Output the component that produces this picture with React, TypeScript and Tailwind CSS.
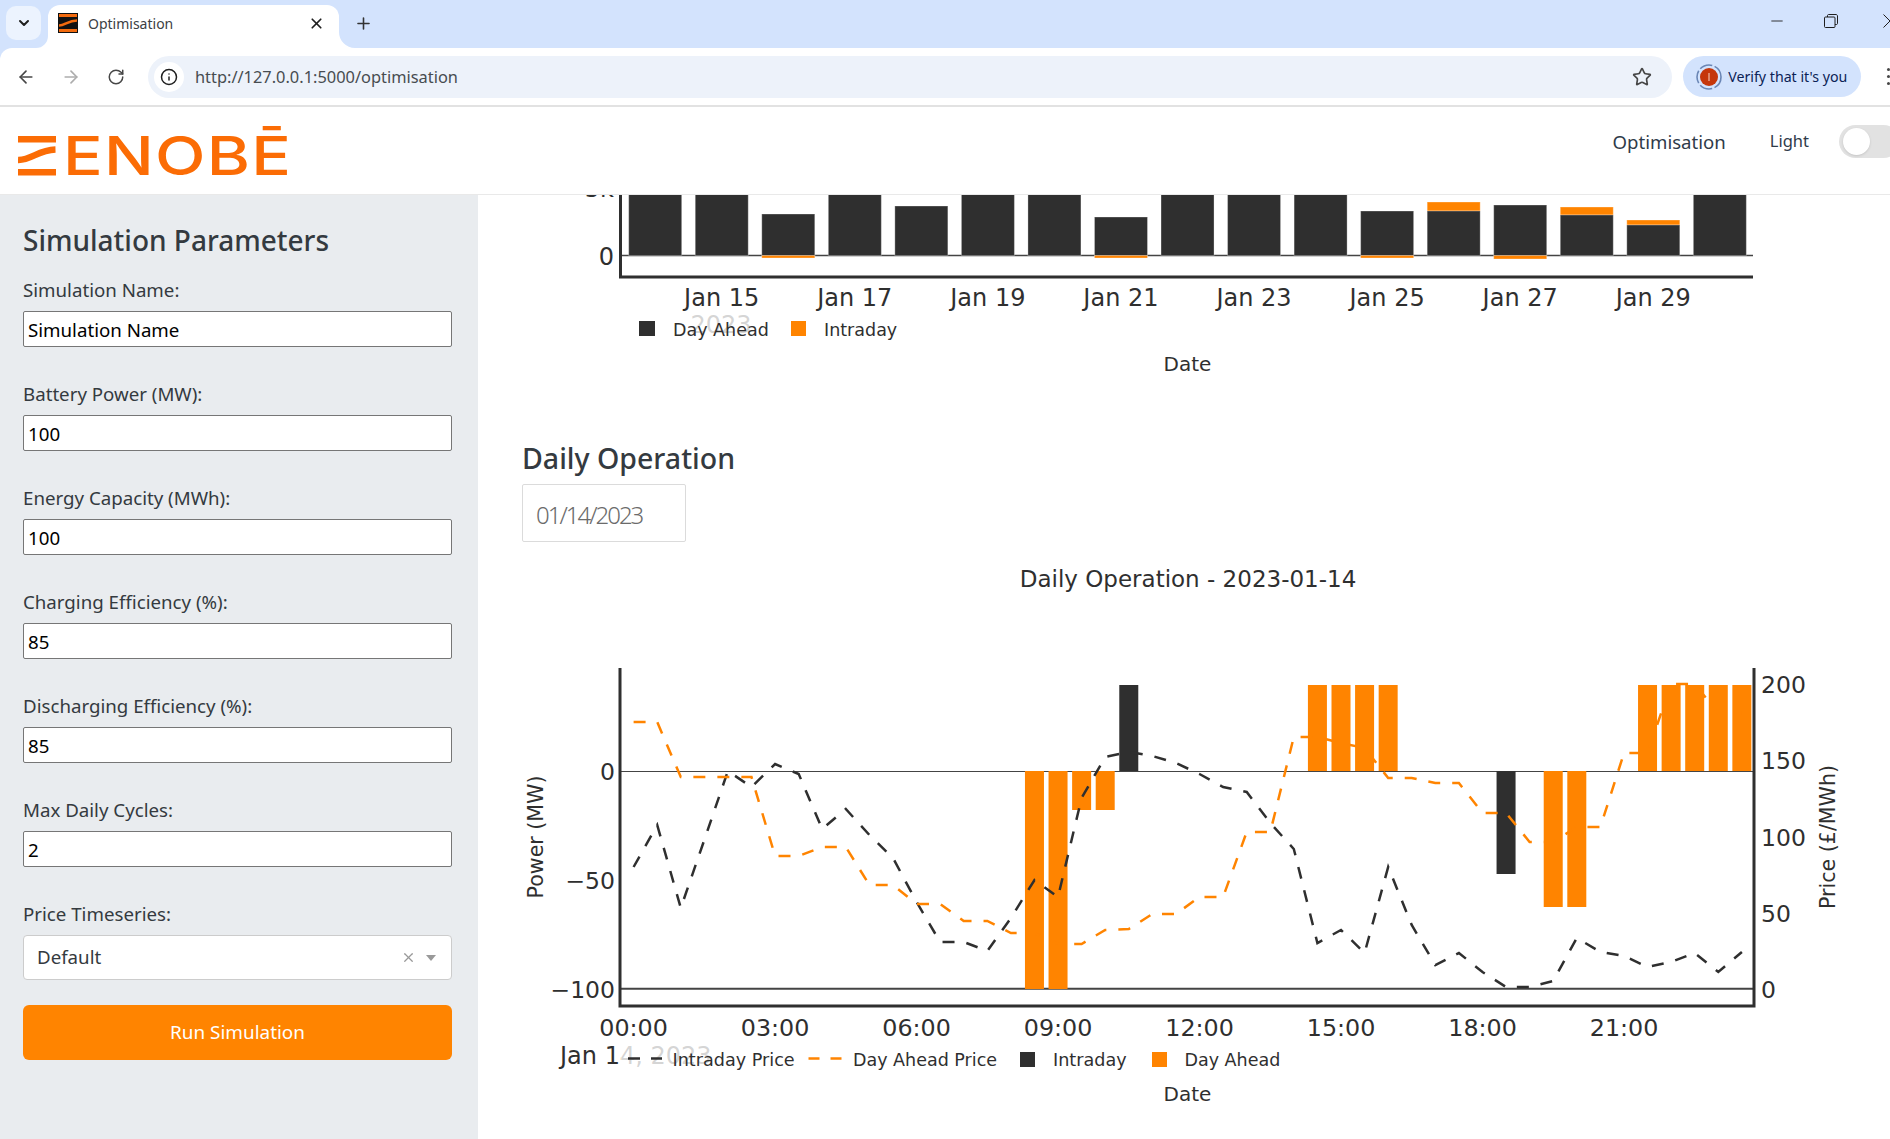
import { ArrowLeft, ArrowRight, ChevronDown, Info, Minus, Plus, RotateCw, Star, X } from "lucide-react";

const ORANGE = "#ff8400";
const DARK = "#2f2f2f";
const CHART_FONT = "'DejaVu Sans', sans-serif";

const fields = [
    { label: "Simulation Name:", value: "Simulation Name" },
    { label: "Battery Power (MW):", value: "100" },
    { label: "Energy Capacity (MWh):", value: "100" },
    { label: "Charging Efficiency (%):", value: "85" },
    { label: "Discharging Efficiency (%):", value: "85" },
    { label: "Max Daily Cycles:", value: "2" },
];

// top chart: y of dark top, orange top/bottom. 190 means the bar runs under the header
const monthBars = [
    { dark: 190 },
    { dark: 190 },
    { dark: 214, below: 258 },
    { dark: 190 },
    { dark: 206 },
    { dark: 190 },
    { dark: 190 },
    { dark: 217, below: 258 },
    { dark: 190 },
    { dark: 190 },
    { dark: 190 },
    { dark: 211, below: 258 },
    { dark: 211, above: 202 },
    { dark: 205, below: 259 },
    { dark: 215, above: 207 },
    { dark: 225, above: 220 },
    { dark: 190 },
];

const monthTicks = ["Jan 15", "Jan 17", "Jan 19", "Jan 21", "Jan 23", "Jan 25", "Jan 27", "Jan 29"];

// half-hourly series, read off the plot in pixels
const intradayPrice = [
    867, 825, 908, 840, 771, 787, 764, 774, 829, 809, 835, 858, 902, 942, 942, 951, 918, 880, 897, 798, 757, 752,
    756, 763, 774, 787, 792, 823, 849, 943, 930, 953, 867, 925, 965, 953, 972, 987, 987, 981, 938, 952, 956, 967,
    962, 953, 972, 952,
];
const dayAheadPrice = [
    722, 722, 777, 777, 777, 777, 856, 856, 847, 847, 885, 885, 904, 904, 921, 921, 933, 933, 944, 944, 930, 929,
    914, 914, 897, 897, 832, 832, 737, 737, 743, 748, 778, 778, 783, 783, 813, 813, 842, 842, 827, 827, 753, 753,
    684, 684, 713, 713,
];

// half-hour slot, top y, bottom y
const dayBars = [
    { slot: 17, top: 771, bottom: 989, color: ORANGE },
    { slot: 18, top: 771, bottom: 989, color: ORANGE },
    { slot: 19, top: 771, bottom: 810, color: ORANGE },
    { slot: 20, top: 771, bottom: 810, color: ORANGE },
    { slot: 21, top: 685, bottom: 771, color: DARK },
    { slot: 29, top: 685, bottom: 771, color: ORANGE },
    { slot: 30, top: 685, bottom: 771, color: ORANGE },
    { slot: 31, top: 685, bottom: 771, color: ORANGE },
    { slot: 32, top: 685, bottom: 771, color: ORANGE },
    { slot: 37, top: 771, bottom: 874, color: DARK },
    { slot: 39, top: 771, bottom: 907, color: ORANGE },
    { slot: 40, top: 771, bottom: 907, color: ORANGE },
    { slot: 43, top: 685, bottom: 771, color: ORANGE },
    { slot: 44, top: 685, bottom: 771, color: ORANGE },
    { slot: 45, top: 685, bottom: 771, color: ORANGE },
    { slot: 46, top: 685, bottom: 771, color: ORANGE },
    { slot: 47, top: 685, bottom: 771, color: ORANGE },
];

const slotX = (slot: number) => 633.6 + slot * 23.58;

const toPoints = (series: number[]) => series.map((y, i) => `${slotX(i).toFixed(1)},${y}`).join(" ");

function Favicon() {
    return (
        <svg width="20" height="20" viewBox="0 0 20 20" className="shrink-0">
            <rect width="20" height="20" fill="#111" />
            <rect x="1" y="1" width="18" height="3" fill="#f26a0e" />
            <rect x="1" y="16" width="18" height="3" fill="#f26a0e" />
            <path d="M1 12.5C7 12.5 10 7.5 19 7.5" fill="none" stroke="#f26a0e" strokeWidth="2.6" />
        </svg>
    );
}

function BrowserTabs() {
    return (
        <div className="flex h-12 items-start overflow-hidden pl-[6px]">
            <div className="mt-[6px] flex h-[34px] w-[35px] items-center justify-center rounded-[10px] bg-[#ecf3fe]">
                <ChevronDown size={16} strokeWidth={3} className="text-[#1f1f1f]" />
            </div>
            <div className="relative mt-[5px] ml-[7px] flex h-[43px] w-[291px] items-center rounded-t-[12px] bg-white pr-[14px] pb-[7px] pl-[10px]">
                <svg width="12" height="12" viewBox="0 0 12 12" className="absolute bottom-0 -left-3">
                    <path d="M12 0V12H0A12 12 0 0 0 12 0Z" fill="#fff" />
                </svg>
                <svg width="16" height="16" viewBox="0 0 16 16" className="absolute -right-4 bottom-0">
                    <path d="M0 0V16H16A16 16 0 0 1 0 0Z" fill="#fff" />
                </svg>
                <Favicon />
                <span className="ml-[10px] flex-1 font-['Noto_Sans'] text-[14px] text-[#3c4043]">Optimisation</span>
                <X size={17} strokeWidth={2.4} className="text-[#1f1f1f]" />
            </div>
            <Plus size={19} strokeWidth={2} className="mt-[14px] ml-[15px] text-[#333]" />
            <div className="mt-[12px] ml-auto flex items-start text-[#1f1f1f]">
                <Minus size={18} strokeWidth={1.2} className="mt-[0px]" />
                <svg width="14" height="14" viewBox="0 0 14 14" className="mt-[2px] ml-[38px]" fill="none" stroke="#1f1f1f">
                    <rect x="0.5" y="3" width="10.5" height="10.5" rx="1" />
                    <path d="M3.5 3V1.5C3.5 1 4 0.5 4.5 0.5H12C12.8 0.5 13.5 1.2 13.5 2V9.5C13.5 10 13 10.5 12.5 10.5H11" />
                </svg>
                <svg width="14" height="14" viewBox="0 0 14 14" className="mt-[2px] mr-[-7px] ml-[45px]" fill="none" stroke="#1f1f1f">
                    <path d="M0.5 0.5L13.5 13.5M13.5 0.5L0.5 13.5" />
                </svg>
            </div>
        </div>
    );
}

function BrowserToolbar() {
    return (
        <div className="flex h-[59px] items-center overflow-hidden rounded-tl-[12px] border-b-2 border-[#e2e2e2] bg-white pl-[16px]">
            <ArrowLeft size={20} className="text-[#474747]" />
            <ArrowRight size={20} className="ml-[25px] text-[#adadad]" />
            <RotateCw size={18} className="ml-[26px] text-[#474747]" />
            <div className="ml-[23px] flex h-[42px] w-[1526px] items-center rounded-full bg-[#edf2fa] pr-[20px] pl-[6px]">
                <div className="flex h-[30px] w-[30px] items-center justify-center rounded-full bg-white">
                    <Info size={18} strokeWidth={2} className="text-[#1f1f1f]" />
                </div>
                <span className="ml-[11px] flex-1 pt-[2px] font-['Noto_Sans'] text-[16.4px] text-[#474c50]">
                    http://127.0.0.1:5000/optimisation
                </span>
                <Star size={20} strokeWidth={2} className="text-[#474747]" />
            </div>
            <div className="ml-[11px] flex h-[41px] w-[178px] items-center rounded-full bg-[#d3e3fd] pl-[13px]">
                <svg width="26" height="26" viewBox="0 0 26 26" className="shrink-0">
                    <circle cx="13" cy="13" r="12" fill="none" stroke="#6a86b5" strokeWidth="1.6" strokeDasharray="13 2.5" />
                    <circle cx="13" cy="13" r="9" fill="#c5360b" />
                    <rect x="12.5" y="9" width="1" height="8" fill="#f7d5c8" />
                </svg>
                <span className="ml-[6px] font-['Noto_Sans'] text-[14.2px] text-[#0b2255]">Verify that it's you</span>
            </div>
            <div className="ml-[26px] flex flex-col gap-[4px]">
                <span className="h-[3px] w-[3px] rounded-full bg-[#474747]" />
                <span className="h-[3px] w-[3px] rounded-full bg-[#474747]" />
                <span className="h-[3px] w-[3px] rounded-full bg-[#474747]" />
            </div>
        </div>
    );
}

function Logo() {
    return (
        <div className="mt-[10px] flex items-center">
            <svg width="38" height="40" viewBox="0 0 38 40" className="shrink-0">
                <path d="M0 0H38V6.5H0Z M0 33H38V39.5H0Z" fill="#fb6c05" />
                <path d="M0 24C13 24.5 20 14 37.5 13.5" fill="none" stroke="#fb6c05" strokeWidth="6.5" />
            </svg>
            <span className="ml-[7px] inline-block origin-left scale-x-[1.22] font-['Inter'] text-[54px] leading-none font-medium tracking-[1px] text-[#fb6c05]">
                ENOBĒ
            </span>
        </div>
    );
}

function PageHeader() {
    return (
        <header className="flex h-[88px] items-center overflow-hidden border-b border-[#e9e9e9] bg-white pl-[18px]">
            <Logo />
            <nav className="mb-[18px] ml-auto flex items-center font-['Noto_Sans'] text-[#2f3b4a]">
                <a className="text-[18.6px]">Optimisation</a>
                <span className="ml-[44px] text-[16.5px]">Light</span>
                <span className="relative mr-[-10px] ml-[30px] h-[33px] w-[61px] rounded-full bg-[#e2e2e2]">
                    <span className="absolute top-[3px] left-[4px] h-[27px] w-[27px] rounded-full bg-white shadow-sm" />
                </span>
            </nav>
        </header>
    );
}

function Sidebar() {
    return (
        <aside className="h-full w-[478px] shrink-0 bg-[#e9ecef] px-[23px] pt-[28px] font-['Noto_Sans'] text-[#343a40]">
            <h2 className="mb-[21px] text-[28px] leading-[34px] font-medium">Simulation Parameters</h2>
            {fields.map((field) => (
                <div key={field.label} className="mb-[35px]">
                    <label className="mb-[9px] block text-[18.7px] leading-[24px]">{field.label}</label>
                    <input
                        readOnly
                        value={field.value}
                        className="block h-[36px] w-[429px] rounded-[2px] border border-[#767676] bg-white px-[4px] text-[18.7px] text-black"
                    />
                </div>
            ))}
            <label className="mb-[9px] block text-[18.7px] leading-[24px]">Price Timeseries:</label>
            <div className="flex h-[45px] w-[429px] items-center rounded-[4px] border border-[#ccc] bg-white pr-[15px] pl-[13px] text-[18.7px]">
                <span className="flex-1">Default</span>
                <X size={15} strokeWidth={2} className="text-[#999]" />
                <span className="ml-[10px] h-0 w-0 border-x-[5px] border-t-[6px] border-x-transparent border-t-[#999]" />
            </div>
            <button
                type="button"
                className="mt-[25px] h-[55px] w-[429px] rounded-[6px] bg-[#ff8400] text-[18.9px] text-white"
            >
                Run Simulation
            </button>
        </aside>
    );
}

function MonthlyChart() {
    return (
        <svg viewBox="478 195 1412 245" className="block h-[245px] w-[1412px] shrink-0" fontFamily={CHART_FONT} fill={DARK}>
            <text x="614" y="196.5" fontSize="24" textAnchor="end">5k</text>
            <text x="614" y="264.5" fontSize="24" textAnchor="end">0</text>
            <line x1="621" x2="1753" y1="255.5" y2="255.5" stroke="#444" strokeWidth="1.5" />
            {monthBars.map((bar, i) => {
                const x = 628.7 + i * 66.54;
                return (
                    <g key={i} stroke="#fff" strokeOpacity="0.3" strokeWidth="1">
                        {bar.above && <rect x={x} y={bar.above} width="53" height={bar.dark - bar.above} fill={ORANGE} />}
                        <rect x={x} y={bar.dark} width="53" height={255.5 - bar.dark} fill={DARK} />
                        {bar.below && <rect x={x} y="255.5" width="53" height={bar.below - 255.5} fill={ORANGE} />}
                    </g>
                );
            })}
            <path d="M620.5 195V277H1753" fill="none" stroke={DARK} strokeWidth="3" />
            {monthTicks.map((tick, i) => (
                <text key={tick} x={721.7 + i * 133.08} y="305.5" fontSize="24" textAnchor="middle">{tick}</text>
            ))}
            <text x="721" y="333" fontSize="24" textAnchor="middle">2023</text>
            <rect x="631" y="314" width="280" height="30" fill="#fff" fillOpacity="0.8" />
            <rect x="639" y="321" width="16" height="15" fill={DARK} />
            <text x="673" y="336" fontSize="17.5">Day Ahead</text>
            <rect x="791" y="321" width="15" height="15" fill={ORANGE} />
            <text x="824" y="336" fontSize="17.5">Intraday</text>
            <text x="1187.5" y="371" fontSize="20" textAnchor="middle">Date</text>
        </svg>
    );
}

function DailyChart() {
    const hours = ["00:00", "03:00", "06:00", "09:00", "12:00", "15:00", "18:00", "21:00"];
    const leftTicks = [
        { label: "0", y: 771 },
        { label: "−50", y: 880 },
        { label: "−100", y: 989 },
    ];
    const rightTicks = [
        { label: "200", y: 684 },
        { label: "150", y: 760 },
        { label: "100", y: 837 },
        { label: "50", y: 913 },
        { label: "0", y: 989 },
    ];

    return (
        <svg viewBox="478 550 1412 589" className="block h-[589px] w-[1412px] shrink-0" fontFamily={CHART_FONT} fill={DARK}>
            <text x="1188" y="587" fontSize="23" textAnchor="middle">Daily Operation - 2023-01-14</text>

            <line x1="621" x2="1754" y1="771.5" y2="771.5" stroke="#444" strokeWidth="1" />
            <line x1="621" x2="1754" y1="988.7" y2="988.7" stroke="#444" strokeWidth="2" />
            {dayBars.map((bar) => (
                <rect
                    key={bar.slot}
                    x={slotX(bar.slot) - 9.5}
                    y={bar.top}
                    width="19"
                    height={bar.bottom - bar.top}
                    fill={bar.color}
                />
            ))}
            <polyline points={toPoints(intradayPrice)} fill="none" stroke={DARK} strokeWidth="2.5" strokeDasharray="12 12" />
            <polyline points={toPoints(dayAheadPrice)} fill="none" stroke={ORANGE} strokeWidth="2.5" strokeDasharray="12 12" />
            <path d="M620 668V1006H1754V668" fill="none" stroke={DARK} strokeWidth="3" />

            {leftTicks.map((tick) => (
                <text key={tick.y} x="615" y={tick.y + 9} fontSize="23.5" textAnchor="end">{tick.label}</text>
            ))}
            {rightTicks.map((tick) => (
                <text key={tick.y} x="1761" y={tick.y + 8.5} fontSize="23.5">{tick.label}</text>
            ))}
            {hours.map((hour, i) => (
                <text key={hour} x={633.6 + i * 141.5} y="1035.5" fontSize="23.8" textAnchor="middle">{hour}</text>
            ))}
            <text x="560" y="1064" fontSize="24">Jan 14, 2023</text>
            <rect x="621" y="1046" width="668" height="30" fill="#fff" fillOpacity="0.8" />

            <text transform="translate(542.5 837) rotate(-90)" fontSize="20.6" textAnchor="middle">Power (MW)</text>
            <text transform="translate(1835 837) rotate(-90)" fontSize="20.6" textAnchor="middle">Price (£/MWh)</text>

            <line x1="628" x2="662" y1="1058.5" y2="1058.5" stroke={DARK} strokeWidth="2.5" strokeDasharray="12 11" />
            <text x="672.5" y="1066" fontSize="17.6">Intraday Price</text>
            <line x1="808.5" x2="842" y1="1058.5" y2="1058.5" stroke={ORANGE} strokeWidth="2.5" strokeDasharray="11 11" />
            <text x="853" y="1066" fontSize="17.5">Day Ahead Price</text>
            <rect x="1020" y="1052" width="15" height="15" fill={DARK} />
            <text x="1053" y="1066" fontSize="17.6">Intraday</text>
            <rect x="1152" y="1052" width="15" height="15" fill={ORANGE} />
            <text x="1184.5" y="1066" fontSize="17.5">Day Ahead</text>
            <text x="1187.5" y="1101" fontSize="20" textAnchor="middle">Date</text>
        </svg>
    );
}

export default function App() {
    return (
        <div className="flex h-screen w-[1890px] flex-col overflow-hidden bg-[#d3e3fd]">
            <BrowserTabs />
            <BrowserToolbar />
            <PageHeader />
            <div className="flex min-h-0 flex-1 bg-white">
                <Sidebar />
                <main className="min-w-0 flex-1 overflow-hidden">
                    <MonthlyChart />
                    <h2 className="ml-[44px] font-['Noto_Sans'] text-[28.5px] leading-[36px] font-medium text-[#343a40]">
                        Daily Operation
                    </h2>
                    <div className="mt-[8px] ml-[44px] flex h-[58px] w-[164px] items-center rounded-[2px] border border-[#dbdbdb] pt-[3px] pl-[13px] font-['Noto_Sans'] text-[24px] font-light tracking-[-2px] text-[#6b6b6b]">
                        01/14/2023
                    </div>
                    <div className="mt-[8px]">
                        <DailyChart />
                    </div>
                </main>
            </div>
        </div>
    );
}
